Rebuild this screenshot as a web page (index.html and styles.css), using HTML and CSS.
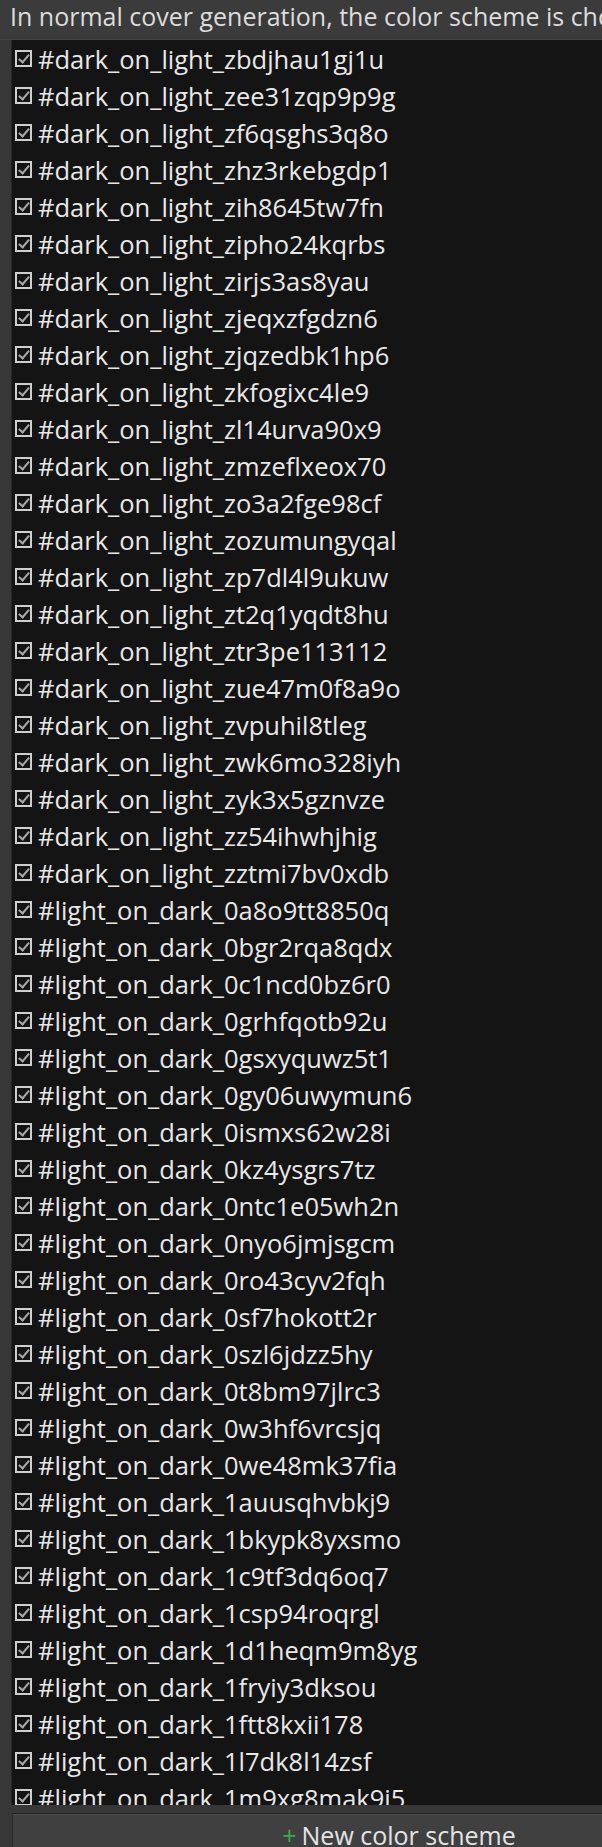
FILE: index.html
```html
<!DOCTYPE html>
<html lang="en">
  <head>
    <meta charset="UTF-8" />
    <meta name="viewport" content="width=device-width, initial-scale=1.0" />
    <title>Color schemes</title>
    <link rel="stylesheet" href="styles.css">
  </head>
  <body>
    <div class="page">
      <div class="intro">
        In normal cover generation, the color scheme is chosen at random from the list of color schemes below.
      </div>

      <div class="scheme-list">
        <div class="scheme"><span class="check"></span>#dark_on_light_zbdjhau1gj1u</div>
        <div class="scheme"><span class="check"></span>#dark_on_light_zee31zqp9p9g</div>
        <div class="scheme"><span class="check"></span>#dark_on_light_zf6qsghs3q8o</div>
        <div class="scheme"><span class="check"></span>#dark_on_light_zhz3rkebgdp1</div>
        <div class="scheme"><span class="check"></span>#dark_on_light_zih8645tw7fn</div>
        <div class="scheme"><span class="check"></span>#dark_on_light_zipho24kqrbs</div>
        <div class="scheme"><span class="check"></span>#dark_on_light_zirjs3as8yau</div>
        <div class="scheme"><span class="check"></span>#dark_on_light_zjeqxzfgdzn6</div>
        <div class="scheme"><span class="check"></span>#dark_on_light_zjqzedbk1hp6</div>
        <div class="scheme"><span class="check"></span>#dark_on_light_zkfogixc4le9</div>
        <div class="scheme"><span class="check"></span>#dark_on_light_zl14urva90x9</div>
        <div class="scheme"><span class="check"></span>#dark_on_light_zmzeflxeox70</div>
        <div class="scheme"><span class="check"></span>#dark_on_light_zo3a2fge98cf</div>
        <div class="scheme"><span class="check"></span>#dark_on_light_zozumungyqal</div>
        <div class="scheme"><span class="check"></span>#dark_on_light_zp7dl4l9ukuw</div>
        <div class="scheme"><span class="check"></span>#dark_on_light_zt2q1yqdt8hu</div>
        <div class="scheme"><span class="check"></span>#dark_on_light_ztr3pe113112</div>
        <div class="scheme"><span class="check"></span>#dark_on_light_zue47m0f8a9o</div>
        <div class="scheme"><span class="check"></span>#dark_on_light_zvpuhil8tleg</div>
        <div class="scheme"><span class="check"></span>#dark_on_light_zwk6mo328iyh</div>
        <div class="scheme"><span class="check"></span>#dark_on_light_zyk3x5gznvze</div>
        <div class="scheme"><span class="check"></span>#dark_on_light_zz54ihwhjhig</div>
        <div class="scheme"><span class="check"></span>#dark_on_light_zztmi7bv0xdb</div>
        <div class="scheme"><span class="check"></span>#light_on_dark_0a8o9tt8850q</div>
        <div class="scheme"><span class="check"></span>#light_on_dark_0bgr2rqa8qdx</div>
        <div class="scheme"><span class="check"></span>#light_on_dark_0c1ncd0bz6r0</div>
        <div class="scheme"><span class="check"></span>#light_on_dark_0grhfqotb92u</div>
        <div class="scheme"><span class="check"></span>#light_on_dark_0gsxyquwz5t1</div>
        <div class="scheme"><span class="check"></span>#light_on_dark_0gy06uwymun6</div>
        <div class="scheme"><span class="check"></span>#light_on_dark_0ismxs62w28i</div>
        <div class="scheme"><span class="check"></span>#light_on_dark_0kz4ysgrs7tz</div>
        <div class="scheme"><span class="check"></span>#light_on_dark_0ntc1e05wh2n</div>
        <div class="scheme"><span class="check"></span>#light_on_dark_0nyo6jmjsgcm</div>
        <div class="scheme"><span class="check"></span>#light_on_dark_0ro43cyv2fqh</div>
        <div class="scheme"><span class="check"></span>#light_on_dark_0sf7hokott2r</div>
        <div class="scheme"><span class="check"></span>#light_on_dark_0szl6jdzz5hy</div>
        <div class="scheme"><span class="check"></span>#light_on_dark_0t8bm97jlrc3</div>
        <div class="scheme"><span class="check"></span>#light_on_dark_0w3hf6vrcsjq</div>
        <div class="scheme"><span class="check"></span>#light_on_dark_0we48mk37fia</div>
        <div class="scheme"><span class="check"></span>#light_on_dark_1auusqhvbkj9</div>
        <div class="scheme"><span class="check"></span>#light_on_dark_1bkypk8yxsmo</div>
        <div class="scheme"><span class="check"></span>#light_on_dark_1c9tf3dq6oq7</div>
        <div class="scheme"><span class="check"></span>#light_on_dark_1csp94roqrgl</div>
        <div class="scheme"><span class="check"></span>#light_on_dark_1d1heqm9m8yg</div>
        <div class="scheme"><span class="check"></span>#light_on_dark_1fryiy3dksou</div>
        <div class="scheme"><span class="check"></span>#light_on_dark_1ftt8kxii178</div>
        <div class="scheme"><span class="check"></span>#light_on_dark_1l7dk8l14zsf</div>
        <div class="scheme"><span class="check"></span>#light_on_dark_1m9xg8mak9i5</div>
      </div>

      <div class="footer">
        <button class="new-btn"><span class="plus">+</span>New color scheme</button>
      </div>
    </div>
  </body>
</html>
```

FILE: styles.css
```css
* {
  margin: 0;
  padding: 0;
  box-sizing: border-box;
}
body {
  width: 602px;
  height: 1847px;
  overflow: hidden;
  background-color: #373737;
  font-family: "Open Sans", "Noto Sans", sans-serif;
  color: #e8e8e8;
}
.page {
  display: flex;
  flex-direction: column;
  height: 1847px;
}
.intro {
  height: 40px;
  flex-shrink: 0;
  padding-left: 10px;
  background-color: #3b3b3b;
  border-bottom: 1px solid #444444;
  font-size: 25px;
  line-height: 32px;
  color: #dddddd;
  white-space: nowrap;
  overflow: hidden;
}
.scheme-list {
  height: 1765px;
  flex-shrink: 0;
  margin-left: 11px;
  border-left: 1px solid #262626;
  background-color: #141414;
  overflow: hidden;
}
.scheme {
  display: flex;
  align-items: center;
  height: 37px;
  padding-left: 3px;
  font-size: 25.5px;
  white-space: nowrap;
}
.check {
  position: relative;
  width: 17px;
  height: 17px;
  margin-right: 6px;
  border: 2px solid #cfcfcf;
  flex-shrink: 0;
}
/* the tick inside the box */
.check::after {
  content: "";
  position: absolute;
  left: 4px;
  top: 0px;
  width: 4px;
  height: 9px;
  border-right: 2px solid #a8a8a8;
  border-bottom: 2px solid #a8a8a8;
  transform: rotate(40deg);
}
.footer {
  display: flex;
  padding-top: 8px;
  padding-left: 12px;
  overflow: hidden;
}
.new-btn {
  width: 774px;
  height: 48px;
  flex-shrink: 0;
  background-color: #404040;
  border: 1px solid #2a2a2a;
  border-top: 1px solid #222222;
  border-radius: 2px;
  box-shadow: inset 0 1px 0 #505050;
  font-family: "Open Sans", "Noto Sans", sans-serif;
  font-size: 25px;
  color: #e4e4e4;
  text-align: center;
  line-height: 42px;
  padding-bottom: 4px;
}
.plus {
  color: #3fa84a;
  margin-right: 5px;
}
```
